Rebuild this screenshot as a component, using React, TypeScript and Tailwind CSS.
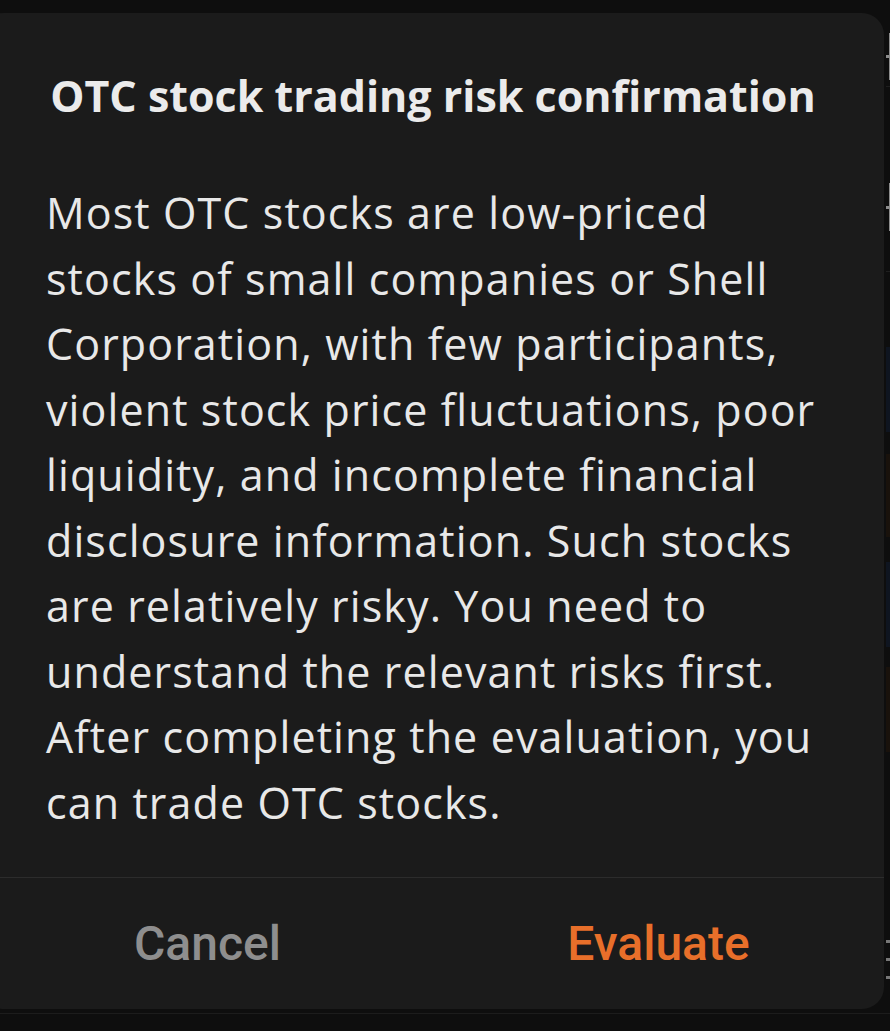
import React from "react";

const lines = [
  "Most OTC stocks are low-priced",
  "stocks of small companies or Shell",
  "Corporation, with few participants,",
  "violent stock price fluctuations, poor",
  "liquidity, and incomplete financial",
  "disclosure information. Such stocks",
  "are relatively risky. You need to",
  "understand the relevant risks first.",
  "After completing the evaluation, you",
  "can trade OTC stocks.",
];

// sliver of the page behind the dialog, visible on the right edge
const EdgeStrip = () => (
  <div className="flex w-[6px] shrink-0 flex-col pt-[20px]">
    <div className="flex h-[47px] items-center">
      <div className="h-[3px] w-[3px] bg-[#8c8c8c]" />
      <div className="h-full w-[2px] bg-[#8c8c8c]" />
    </div>
    <div className="mt-[6px] h-px bg-[#1f1f1f]" />
    <div className="h-[96px]" />
    <div className="flex h-[48px] items-center">
      <div className="h-[3px] w-[3px] bg-[#8c8c8c]" />
      <div className="h-full w-[2px] bg-[#8c8c8c]" />
    </div>
    <div className="mt-[40px] h-px bg-[#1f1f1f]" />
    <div className="h-[75px]" />
    <div className="h-[85px] bg-[#0f1520]" />
    <div className="h-[22px]" />
    <div className="h-[83px] bg-[#19120c]" />
    <div className="h-[25px]" />
    <div className="h-[85px] bg-[#0f1520]" />
    <div className="h-[20px]" />
    <div className="h-[85px] bg-[#19120c]" />
    <div className="h-[188px]" />
    <div className="h-[3px] bg-[#777]" />
    <div className="h-[15px]" />
    <div className="h-[3px] bg-[#777]" />
    <div className="h-[15px]" />
    <div className="h-[3px] bg-[#777]" />
  </div>
);

export default function App() {
  return (
    <div className="flex min-h-screen flex-col overflow-hidden bg-[#0e0e0e]">
      <div className="flex pt-[13px]">
        <div className="-ml-[18px] flex h-[996px] w-[902px] shrink-0 flex-col rounded-[22px] bg-[#1b1b1b]">
          <h2
            className="pt-[56px] text-center text-[43px] font-bold leading-[54px] text-[#ebebeb]"
            style={{ fontFamily: "'Open Sans', sans-serif" }}
          >
            OTC stock trading risk confirmation
          </h2>
          <p
            className="pl-[64px] pt-[57px] text-[43px] leading-[65.5px] tracking-[1.1px] text-[#e8e8e8]"
            style={{ fontFamily: "'Open Sans', sans-serif" }}
          >
            {lines.map((l) => (
              <span key={l} className="block whitespace-nowrap">
                {l}
              </span>
            ))}
          </p>
          <div className="mt-auto flex h-[132px] border-t border-[#2c2c2c]">
            <button
              className="flex-1 text-[48px] font-medium text-[#8e8e8e]"
              style={{ fontFamily: "Roboto, sans-serif" }}
            >
              Cancel
            </button>
            <button
              className="flex-1 text-[48px] font-medium text-[#e86f2a]"
              style={{ fontFamily: "Roboto, sans-serif" }}
            >
              Evaluate
            </button>
          </div>
        </div>
        <div className="w-[2px] shrink-0" />
        <EdgeStrip />
      </div>
      <div className="mt-[4px] h-px bg-[#1c1c1c]" />
    </div>
  );
}
